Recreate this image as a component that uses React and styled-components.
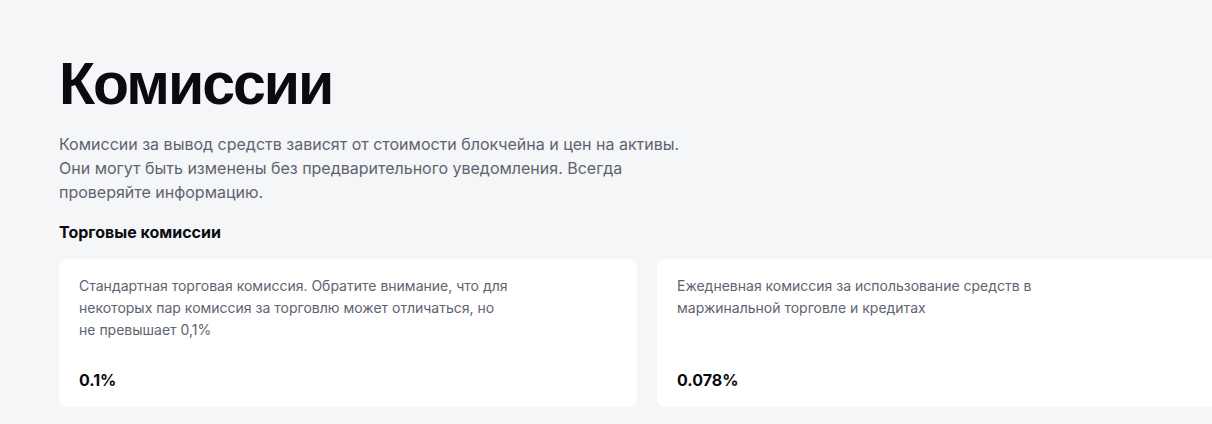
import React from "react";
import styled, { createGlobalStyle } from "styled-components";

const GlobalStyle = createGlobalStyle`
  html, body {
    margin: 0;
    padding: 0;
    background: #f5f6f8;
    overflow: hidden;
  }
  body {
    font-family: Inter, "Noto Sans", sans-serif;
    color: #0b0b0f;
  }
`;

const Page = styled.main`
  width: 1294px;
  box-sizing: border-box;
  padding: 48px 59px 0;
`;

const Title = styled.h1`
  margin: 0;
  font-family: "Liberation Sans", Arial, sans-serif;
  font-size: 59px;
  line-height: 72px;
  font-weight: 700;
  letter-spacing: -2px;
  color: #0b0b0f;
`;

const Lead = styled.p`
  margin: 12px 0 0;
  max-width: 640px;
  font-size: 16px;
  line-height: 24px;
  color: #5e6370;
`;

const SectionTitle = styled.h2`
  margin: 16px 0 0;
  font-size: 16px;
  line-height: 24px;
  font-weight: 700;
  color: #0b0b0f;
`;

const Grid = styled.div`
  margin-top: 15px;
  display: grid;
  grid-template-columns: 1fr 1fr;
  gap: 20px;
`;

const Card = styled.div`
  background: #ffffff;
  border-radius: 8px;
  padding: 16px 20px 15px;
  height: 148px;
  box-sizing: border-box;
  display: flex;
  flex-direction: column;
  justify-content: space-between;
`;

const CardText = styled.p`
  margin: 0;
  max-width: 432px;
  font-size: 14px;
  line-height: 22px;
  color: #5e6370;
`;

const Value = styled.div`
  font-size: 16px;
  line-height: 24px;
  font-weight: 700;
  color: #0b0b0f;
`;

const fees = [
  {
    text: "Стандартная торговая комиссия. Обратите внимание, что для некоторых пар комиссия за торговлю может отличаться, но не превышает 0,1%",
    value: "0.1%",
  },
  {
    text: "Ежедневная комиссия за использование средств в маржинальной торговле и кредитах",
    value: "0.078%",
  },
];

const App = () => {
  return (
    <>
      <GlobalStyle />
      <Page>
        <Title>Комиссии</Title>
        <Lead>
          Комиссии за вывод средств зависят от стоимости блокчейна и цен на
          активы. Они могут быть изменены без предварительного уведомления.
          Всегда проверяйте информацию.
        </Lead>
        <SectionTitle>Торговые комиссии</SectionTitle>
        <Grid>
          {fees.map(({ text, value }) => (
            <Card key={value}>
              <CardText>{text}</CardText>
              <Value>{value}</Value>
            </Card>
          ))}
        </Grid>
      </Page>
    </>
  );
};

export default App;
